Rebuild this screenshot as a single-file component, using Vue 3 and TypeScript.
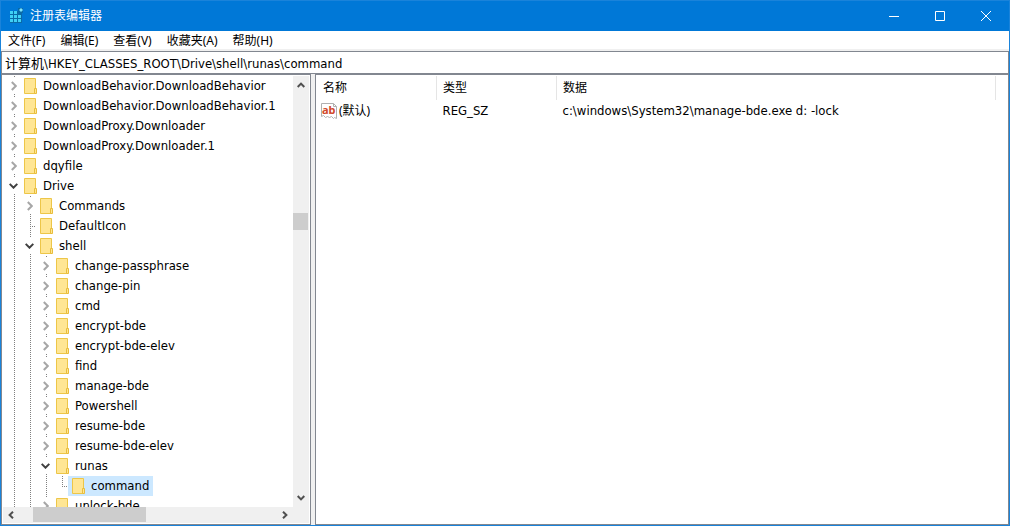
<script setup lang="ts">
import { ref } from 'vue'

type Guide = 'tee' | 'elbow'
interface TreeNode {
  name: string
  level: number
  state: 'open' | 'closed' | 'leaf'
  last?: boolean
}

const menus: string[] = ['文件(F)', '编辑(E)', '查看(V)', '收藏夹(A)', '帮助(H)']
const path = ref('计算机\\HKEY_CLASSES_ROOT\\Drive\\shell\\runas\\command')
const selected = ref('command')

const nodes: TreeNode[] = [
  { name: 'DownloadBehavior.DownloadBehavior', level: 0, state: 'closed' },
  { name: 'DownloadBehavior.DownloadBehavior.1', level: 0, state: 'closed' },
  { name: 'DownloadProxy.Downloader', level: 0, state: 'closed' },
  { name: 'DownloadProxy.Downloader.1', level: 0, state: 'closed' },
  { name: 'dqyfile', level: 0, state: 'closed' },
  { name: 'Drive', level: 0, state: 'open' },
  { name: 'Commands', level: 1, state: 'closed' },
  { name: 'DefaultIcon', level: 1, state: 'leaf' },
  { name: 'shell', level: 1, state: 'open' },
  { name: 'change-passphrase', level: 2, state: 'closed' },
  { name: 'change-pin', level: 2, state: 'closed' },
  { name: 'cmd', level: 2, state: 'closed' },
  { name: 'encrypt-bde', level: 2, state: 'closed' },
  { name: 'encrypt-bde-elev', level: 2, state: 'closed' },
  { name: 'find', level: 2, state: 'closed' },
  { name: 'manage-bde', level: 2, state: 'closed' },
  { name: 'Powershell', level: 2, state: 'closed' },
  { name: 'resume-bde', level: 2, state: 'closed' },
  { name: 'resume-bde-elev', level: 2, state: 'closed' },
  { name: 'runas', level: 2, state: 'open' },
  { name: 'command', level: 3, state: 'leaf', last: true },
  { name: 'unlock-bde', level: 2, state: 'closed' },
]

function leafGuide(node: TreeNode): Guide {
  return node.last ? 'elbow' : 'tee'
}
</script>

<template>
  <div class="window">
    <header class="titlebar">
      <svg class="app-icon" width="16" height="16" viewBox="0 0 16 16" aria-hidden="true">
        <path d="M1 3h12v12H1z" fill="#0a6aa8" />
        <path d="M1 3h3v3H1zM5 3h3v3H5zM1 7h3v3H1zM5 7h3v3H5zM9 7h3v3H9zM1 11h3v3H1zM5 11h3v3H5zM9 11h3v3H9z" fill="#3fd0f5" />
        <path d="M9 0h5v5H9z" fill="#0a6aa8" />
        <path d="M12 0l2 2-2 2-2-2z" fill="#7de4fb" />
      </svg>
      <h1>注册表编辑器</h1>
      <div class="controls">
        <button type="button" aria-label="最小化">
          <svg width="10" height="10" viewBox="0 0 10 10"><path d="M0 5.5h10" /></svg>
        </button>
        <button type="button" aria-label="最大化">
          <svg width="10" height="10" viewBox="0 0 10 10"><path d="M.5.5h9v9h-9z" /></svg>
        </button>
        <button type="button" aria-label="关闭">
          <svg width="10" height="10" viewBox="0 0 10 10"><path d="M0 0l10 10M10 0L0 10" /></svg>
        </button>
      </div>
    </header>

    <nav class="menubar">
      <button v-for="m in menus" :key="m" type="button">{{ m }}</button>
    </nav>

    <input v-model="path" class="address" type="text" aria-label="地址" spellcheck="false" />

    <main class="panes">
      <section class="tree-pane">
        <ul class="tree" role="tree">
          <li v-for="node in nodes" :key="node.name" class="row" role="treeitem" :aria-selected="selected === node.name">
            <span v-for="n in node.level" :key="n" class="guide"></span>
            <button
              v-if="node.state !== 'leaf'"
              type="button"
              class="toggle"
              :class="node.state"
              :aria-label="(node.state === 'open' ? '折叠 ' : '展开 ') + node.name"
            >
              <svg v-if="node.state === 'closed'" width="6" height="10" viewBox="0 0 6 10"><path d="M.8 1L4.8 5 .8 9" /></svg>
              <svg v-else width="9" height="6" viewBox="0 0 9 6"><path d="M.7.9l3.8 3.8L8.3.9" /></svg>
            </button>
            <span v-else class="branch" :class="leafGuide(node)"></span>
            <button type="button" class="label" :class="{ selected: selected === node.name }" @click="selected = node.name">
              <svg width="14" height="16" viewBox="0 0 14 16" aria-hidden="true">
                <path d="M.5.5h11v15H.5z" fill="#ffe694" stroke="#edc648" />
                <path d="M10.5 10.5h2v5h-2z" fill="#ffe694" stroke="#e8bd3c" />
              </svg>
              <span>{{ node.name }}</span>
            </button>
          </li>
        </ul>
        <div class="vbar">
          <button type="button" aria-label="向上滚动"><svg width="8" height="6" viewBox="0 0 8 6"><path d="M.7 5L4 1.6 7.3 5" /></svg></button>
          <div class="track"><div class="thumb"></div></div>
          <button type="button" aria-label="向下滚动"><svg width="8" height="6" viewBox="0 0 8 6"><path d="M.7 1L4 4.4 7.3 1" /></svg></button>
        </div>
        <div class="hbar">
          <button type="button" aria-label="向左滚动"><svg width="6" height="8" viewBox="0 0 6 8"><path d="M5 .7L1.6 4 5 7.3" /></svg></button>
          <div class="track"><div class="thumb"></div></div>
          <button type="button" aria-label="向右滚动"><svg width="6" height="8" viewBox="0 0 6 8"><path d="M1 .7L4.4 4 1 7.3" /></svg></button>
        </div>
        <div class="corner"></div>
      </section>

      <section class="value-pane">
        <table>
          <thead>
            <tr><th class="name">名称</th><th class="kind">类型</th><th>数据</th></tr>
          </thead>
          <tbody>
            <tr>
              <td>
                <div class="value-name">
                  <svg width="16" height="16" viewBox="0 0 16 16" aria-hidden="true">
                    <path d="M.5.5h12l3 3v12l-2-1-1 1-2-2-2 1-2-1-2 1-2-2-2 1z" fill="#fff" stroke="#b0b0b0" />
                    <path d="M12.5.5v3h3" fill="none" stroke="#b0b0b0" />
                    <text x="1" y="11" font-size="11" font-weight="700" fill="#d1492b">ab</text>
                  </svg>
                  <span>(默认)</span>
                </div>
              </td>
              <td class="latin">REG_SZ</td>
              <td class="latin">c:\windows\System32\manage-bde.exe d: -lock</td>
            </tr>
          </tbody>
        </table>
      </section>
    </main>
  </div>
</template>

<style>
body {
  margin: 0;
}
</style>

<style scoped>
.window {
  box-sizing: border-box;
  display: flex;
  flex-direction: column;
  height: 100vh;
  border: 1px solid #1a83da;
  background: #f0f0f0;
  color: #000;
  font: 12px/20px "Noto Sans", "Noto Sans CJK SC", sans-serif;
}
button,
input {
  margin: 0;
  padding: 0;
  border: 0;
  background: none;
  color: inherit;
  font: inherit;
}
svg {
  display: block;
  flex: none;
}
.titlebar {
  display: flex;
  align-items: center;
  flex: none;
  height: 30px;
  padding-left: 8px;
  background: #0078d7;
  color: #fff;
}
.titlebar h1 {
  flex: 1;
  margin: 0 0 0 5px;
  font-size: 12px;
  font-weight: 400;
}
.controls {
  display: flex;
  align-self: stretch;
}
.controls button {
  display: grid;
  place-items: center;
  width: 46px;
}
.controls path {
  fill: none;
  stroke: #fff;
}
.menubar {
  display: flex;
  flex: none;
  height: 18px;
  padding-left: 7px;
  gap: 15px;
  border-bottom: 2px solid #f0f0f0;
  background: #fff;
}
.menubar button {
  line-height: 20px;
}
.address {
  box-sizing: border-box;
  flex: none;
  height: 23px;
  padding: 0 3px;
  border: 1px solid #828790;
  background: #fff;
  font-family: "DejaVu Sans Condensed", "Noto Sans CJK SC", sans-serif;
  font-size: 13px;
  outline: none;
}
.panes {
  display: flex;
  flex: 1;
  min-height: 0;
  gap: 4px;
}
.tree-pane {
  box-sizing: border-box;
  display: grid;
  grid-template-columns: 1fr 16px;
  grid-template-rows: minmax(0, 1fr) 16px;
  flex: none;
  width: 310px;
  padding: 1px;
  border: 1px solid #828790;
  background: #fff;
}
.tree {
  margin: 0;
  padding: 0 0 0 3px;
  overflow: hidden;
  list-style: none;
}
.row {
  display: flex;
  height: 20px;
}
.guide {
  width: 16px;
  background: repeating-linear-gradient(#808080 0 1px, transparent 1px 2px) 8px 0 / 1px 100% no-repeat;
}
.toggle {
  display: grid;
  place-items: center;
  width: 14px;
  padding-left: 2px;
  background:
    repeating-linear-gradient(#808080 0 1px, transparent 1px 2px) 8px 0 / 1px 2px no-repeat,
    repeating-linear-gradient(#808080 0 1px, transparent 1px 2px) 8px 18px / 1px 2px no-repeat;
}
.toggle.open {
  padding-left: 1px;
}
.toggle path {
  fill: none;
  stroke: #a6a6a6;
  stroke-width: 2;
}
.toggle.open path {
  stroke: #404040;
}
.branch {
  width: 14px;
}
.branch.tee {
  background:
    repeating-linear-gradient(#808080 0 1px, transparent 1px 2px) 8px 0 / 1px 100% no-repeat,
    repeating-linear-gradient(90deg, #808080 0 1px, transparent 1px 2px) 8px 10px / 6px 1px no-repeat;
}
.branch.elbow {
  background:
    repeating-linear-gradient(#808080 0 1px, transparent 1px 2px) 8px 0 / 1px 10px no-repeat,
    repeating-linear-gradient(90deg, #808080 0 1px, transparent 1px 2px) 8px 10px / 6px 1px no-repeat;
}
.label {
  display: flex;
  align-items: center;
  gap: 5px;
  padding: 0 4px;
  font-family: "DejaVu Sans Condensed", sans-serif;
  font-size: 13px;
  line-height: 18px;
  white-space: nowrap;
}
.label.selected {
  background: #cce8ff;
}
.vbar,
.hbar {
  display: flex;
  background: #f0f0f0;
}
.vbar {
  flex-direction: column;
}
.vbar button,
.hbar button {
  display: grid;
  place-items: center;
  flex: none;
  width: 16px;
  height: 16px;
}
.vbar button {
  width: 15px;
  height: 18px;
}
.vbar path,
.hbar path {
  fill: none;
  stroke: #505050;
  stroke-width: 2;
}
.track {
  flex: 1;
}
.thumb {
  background: #cdcdcd;
}
.vbar .track {
  padding-top: 119px;
}
.vbar .thumb {
  width: 15px;
  height: 17px;
}
.hbar .track {
  padding-left: 14px;
}
.hbar .thumb {
  width: 113px;
  height: 15px;
}
.corner {
  background: #f0f0f0;
}
.value-pane {
  flex: 1;
  min-width: 0;
  padding: 1px;
  border: 1px solid #828790;
  background: #fff;
}
table {
  width: calc(100% - 11px);
  border-collapse: collapse;
  table-layout: fixed;
}
th {
  height: 24px;
  padding: 0 6px;
  border-right: 1px solid #e5e5e5;
  font-weight: 400;
  text-align: left;
}
th.name,
th.kind {
  width: 107px;
}
td {
  height: 22px;
  padding: 0 6px;
  white-space: nowrap;
}
td:first-child {
  padding-left: 4px;
}
.latin {
  font-family: "DejaVu Sans Condensed", sans-serif;
  font-size: 13px;
}
.value-name {
  display: flex;
  align-items: center;
  gap: 2px;
}
</style>
